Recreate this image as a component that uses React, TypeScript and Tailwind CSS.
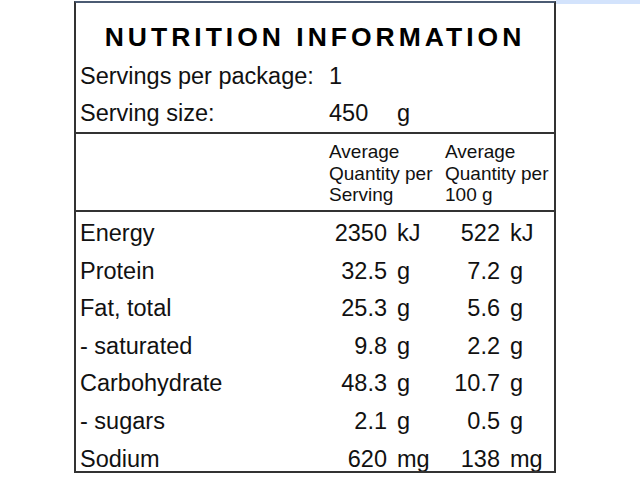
import React from "react";

const rows: [string, string, string, string, string][] = [
  ["Energy", "2350", "kJ", "522", "kJ"],
  ["Protein", "32.5", "g", "7.2", "g"],
  ["Fat, total", "25.3", "g", "5.6", "g"],
  ["- saturated", "9.8", "g", "2.2", "g"],
  ["Carbohydrate", "48.3", "g", "10.7", "g"],
  ["- sugars", "2.1", "g", "0.5", "g"],
  ["Sodium", "620", "mg", "138", "mg"],
];

export default function App() {
  return (
    <div className="w-[640px] h-[481px] bg-white flex items-start font-['Liberation_Sans',Arial,sans-serif] text-[#111]">
      <div className="ml-[74px] mt-[1px] w-[482px] border-2 border-[#333] border-t-[#4b5b73] flex flex-col">
        <div className="h-[55px] pt-[15px] flex items-center justify-center text-[26.5px] font-bold tracking-[4px] text-[#000]">
          NUTRITION INFORMATION
        </div>
        <div className="h-[38px] grid grid-cols-[253px_58px_58px_55px_54px] items-center text-[23.5px]">
          <div className="pl-[4px] whitespace-nowrap">Servings per package:</div>
          <div>1</div>
        </div>
        <div className="h-[38px] grid grid-cols-[253px_58px_58px_55px_54px] items-center text-[23.5px] border-b-2 border-[#333]">
          <div className="pl-[4px]">Serving size:</div>
          <div>450</div>
          <div className="pl-[10px]">g</div>
        </div>
        <div className="h-[78px] pt-[3px] grid grid-cols-[253px_116px_109px] items-center text-[19px] leading-[21.5px] border-b-2 border-[#333]">
          <div></div>
          <div>
            Average
            <br />
            Quantity per
            <br />
            Serving
          </div>
          <div>
            Average
            <br />
            Quantity per
            <br />
            100 g
          </div>
        </div>
        {rows.map(([label, a, au, b, bu], i) => (
          <div
            key={label}
            className={`${i === rows.length - 1 ? "h-[33px]" : "h-[37.6px]"} pt-[8px] grid grid-cols-[253px_58px_58px_55px_54px] items-start text-[23.5px] leading-[26px] overflow-hidden`}
          >
            <div className="pl-[4px]">{label}</div>
            <div className="text-right">{a}</div>
            <div className="pl-[10px]">{au}</div>
            <div className="text-right">{b}</div>
            <div className="pl-[10px]">{bu}</div>
          </div>
        ))}
      </div>
      <div className="flex-1 h-[4px] bg-[#d3e3fc]"></div>
    </div>
  );
}
